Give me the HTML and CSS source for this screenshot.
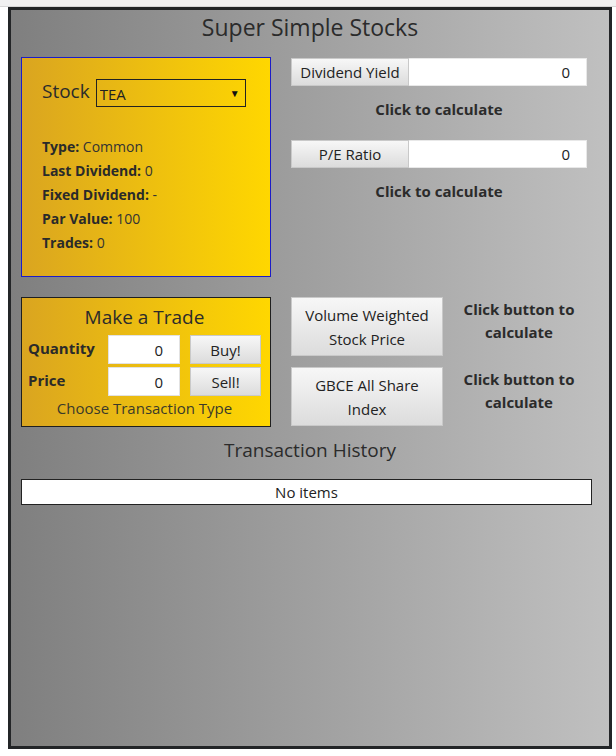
FILE: index.html
```html
<!DOCTYPE html>
<html lang="en">
<head>
<meta charset="utf-8">
<title>Super Simple Stocks</title>
<link rel="stylesheet" href="styles.css">
</head>
<body>
<div class="topbar"></div>
<div class="app">
  <h1 class="title">Super Simple Stocks</h1>
  <div class="main">
    <section class="top">
      <div class="stock-box">
        <div class="stock-row">
          <label class="stock-label" for="stock">Stock</label>
          <div class="select-wrap">
            <select id="stock" class="stock-select">
              <option>TEA</option>
              <option>POP</option>
              <option>ALE</option>
              <option>GIN</option>
              <option>JOE</option>
            </select>
            <span class="select-arrow">▼</span>
          </div>
        </div>
        <ul class="info">
          <li><b>Type:</b> Common</li>
          <li><b>Last Dividend:</b> 0</li>
          <li><b>Fixed Dividend:</b> -</li>
          <li><b>Par Value:</b> 100</li>
          <li><b>Trades:</b> 0</li>
        </ul>
      </div>
      <div class="calcs">
        <div class="calc">
          <div class="calc-row">
            <button class="btn calc-btn">Dividend Yield</button>
            <input class="calc-input" type="text" value="0">
          </div>
          <p class="calc-note">Click to calculate</p>
        </div>
        <div class="calc">
          <div class="calc-row">
            <button class="btn calc-btn">P/E Ratio</button>
            <input class="calc-input" type="text" value="0">
          </div>
          <p class="calc-note">Click to calculate</p>
        </div>
      </div>
    </section>
    <section class="middle">
      <div class="trade-box">
        <h2 class="trade-title">Make a Trade</h2>
        <div class="trade-row">
          <span class="trade-label">Quantity</span>
          <input class="trade-input" type="text" value="0">
          <button class="btn trade-btn">Buy!</button>
        </div>
        <div class="trade-row">
          <span class="trade-label">Price</span>
          <input class="trade-input" type="text" value="0">
          <button class="btn trade-btn">Sell!</button>
        </div>
        <p class="trade-note">Choose Transaction Type</p>
      </div>
      <div class="indexes">
        <div class="index-row">
          <button class="btn index-btn">Volume Weighted Stock Price</button>
          <p class="index-note">Click button to calculate</p>
        </div>
        <div class="index-row">
          <button class="btn index-btn">GBCE All Share Index</button>
          <p class="index-note">Click button to calculate</p>
        </div>
      </div>
    </section>
    <h2 class="history-title">Transaction History</h2>
    <table class="history">
      <tbody>
        <tr><td>No items</td></tr>
      </tbody>
    </table>
  </div>
</div>
</body>
</html>
```

FILE: styles.css
```css
html, body {
  margin: 0;
  padding: 0;
  background: #ffffff;
}
body {
  font-family: "Open Sans", "Noto Sans", sans-serif;
  color: #2a2a2a;
  width: 616px;
  height: 756px;
  overflow: hidden;
}
.topbar {
  height: 6px;
  background: #f1f1f1;
  border-bottom: 1px solid #d6d6d6;
}
.app {
  box-sizing: border-box;
  margin-left: 8px;
  width: 604px;
  height: 742px;
  border: 3px solid #232527;
  background: linear-gradient(to right, #7f7f7f, #c0c0c0);
}
.title {
  margin: 0;
  padding-top: 0;
  font-size: 23px;
  font-weight: 500;
  line-height: 34px;
  text-align: center;
  color: #2b2b2b;
}
.main {
  padding: 13px 10px 0;
}
.top {
  display: grid;
  grid-template-columns: 250px 296px;
  column-gap: 20px;
}
.stock-box {
  box-sizing: border-box;
  height: 220px;
  border: 1px solid #1c1cc8;
  background: linear-gradient(to right, #daa520, #ffd700);
  padding: 21px 20px 0;
}
.stock-row {
  display: flex;
  align-items: center;
  gap: 6px;
}
.stock-label {
  font-size: 19px;
  font-weight: 500;
  line-height: 28px;
  color: #2b2b2b;
  position: relative;
  top: -2px;
}
.select-wrap {
  position: relative;
  width: 150px;
  height: 28px;
}
.stock-select {
  appearance: none;
  -webkit-appearance: none;
  box-sizing: border-box;
  width: 150px;
  height: 28px;
  margin: 0;
  border: 1px solid #222;
  border-radius: 0;
  background: transparent;
  font-family: inherit;
  font-size: 15px;
  color: #222;
  padding: 2px 0 0 3px;
}
.select-arrow {
  position: absolute;
  right: 6px;
  top: 9px;
  font-size: 10px;
  line-height: 10px;
  color: #111;
  pointer-events: none;
}
.info {
  list-style: none;
  margin: 28px 0 0;
  padding: 0;
  font-size: 14px;
  line-height: 24px;
  color: #333;
}
.info b {
  color: #2a2a2a;
}
.calcs {
  padding-top: 1px;
}
.calc-row {
  display: flex;
  height: 28px;
}
.btn {
  box-sizing: border-box;
  margin: 0;
  font-family: inherit;
  color: #222;
  background: linear-gradient(to bottom, #f7f7f7, #dcdcdc);
  border: 1px solid #c9c9c9;
  border-radius: 0;
  padding: 0;
}
.calc-btn {
  width: 118px;
  height: 28px;
  font-size: 15px;
}
.calc-input {
  box-sizing: border-box;
  width: 178px;
  height: 28px;
  margin: 0;
  border: 1px solid #e8e8e8;
  border-left: none;
  background: #fff;
  font-family: inherit;
  font-size: 15px;
  color: #222;
  text-align: right;
  padding: 0 16px 0 0;
}
.calc-note {
  margin: 11px 0 19px;
  width: 296px;
  font-size: 15px;
  font-weight: 700;
  line-height: 24px;
  text-align: center;
  color: #2b2b2b;
}
.middle {
  display: grid;
  grid-template-columns: 250px 1fr;
  column-gap: 20px;
  margin-top: 20px;
}
.trade-box {
  box-sizing: border-box;
  height: 130px;
  border: 1px solid #1f1f1f;
  background: linear-gradient(to right, #daa520, #ffd700);
  padding: 6px 9px 0 6px;
}
.trade-title {
  margin: 0 0 5px;
  font-size: 19px;
  font-weight: 500;
  line-height: 26px;
  text-align: center;
  color: #2b2b2b;
}
.trade-row {
  display: flex;
  align-items: center;
  height: 29px;
  margin-bottom: 3px;
}
.trade-label {
  width: 80px;
  font-size: 15px;
  font-weight: 700;
  color: #2a2a2a;
  position: relative;
  top: -2px;
}
.trade-input {
  box-sizing: border-box;
  width: 72px;
  height: 29px;
  margin: 0;
  border: 1px solid #e2e2e2;
  background: #fff;
  font-family: inherit;
  font-size: 15px;
  color: #222;
  text-align: right;
  padding: 0 16px 0 0;
}
.trade-btn {
  width: 71px;
  height: 29px;
  margin-left: 10px;
  font-size: 15px;
}
.trade-note {
  margin: -1px 0 0;
  font-size: 15px;
  line-height: 20px;
  text-align: center;
  color: #3a3a2a;
}
.indexes {
  display: flex;
  flex-direction: column;
  gap: 11px;
}
.index-row {
  display: flex;
  align-items: flex-start;
}
.index-btn {
  width: 152px;
  height: 59px;
  font-size: 15px;
  line-height: 24px;
  padding: 0 8px;
}
.index-note {
  margin: 1px 0 0;
  width: 152px;
  font-size: 15px;
  font-weight: 700;
  line-height: 23px;
  text-align: center;
  color: #2b2b2b;
}
.history-title {
  margin: 9px 0 0;
  font-size: 19px;
  font-weight: 500;
  line-height: 28px;
  text-align: center;
  color: #2b2b2b;
}
.history {
  width: 571px;
  margin-top: 15px;
  border-collapse: collapse;
  background: #fff;
  border: 1px solid #222;
}
.history td {
  height: 24px;
  padding: 0;
  font-size: 15px;
  text-align: center;
  color: #222;
}
```
